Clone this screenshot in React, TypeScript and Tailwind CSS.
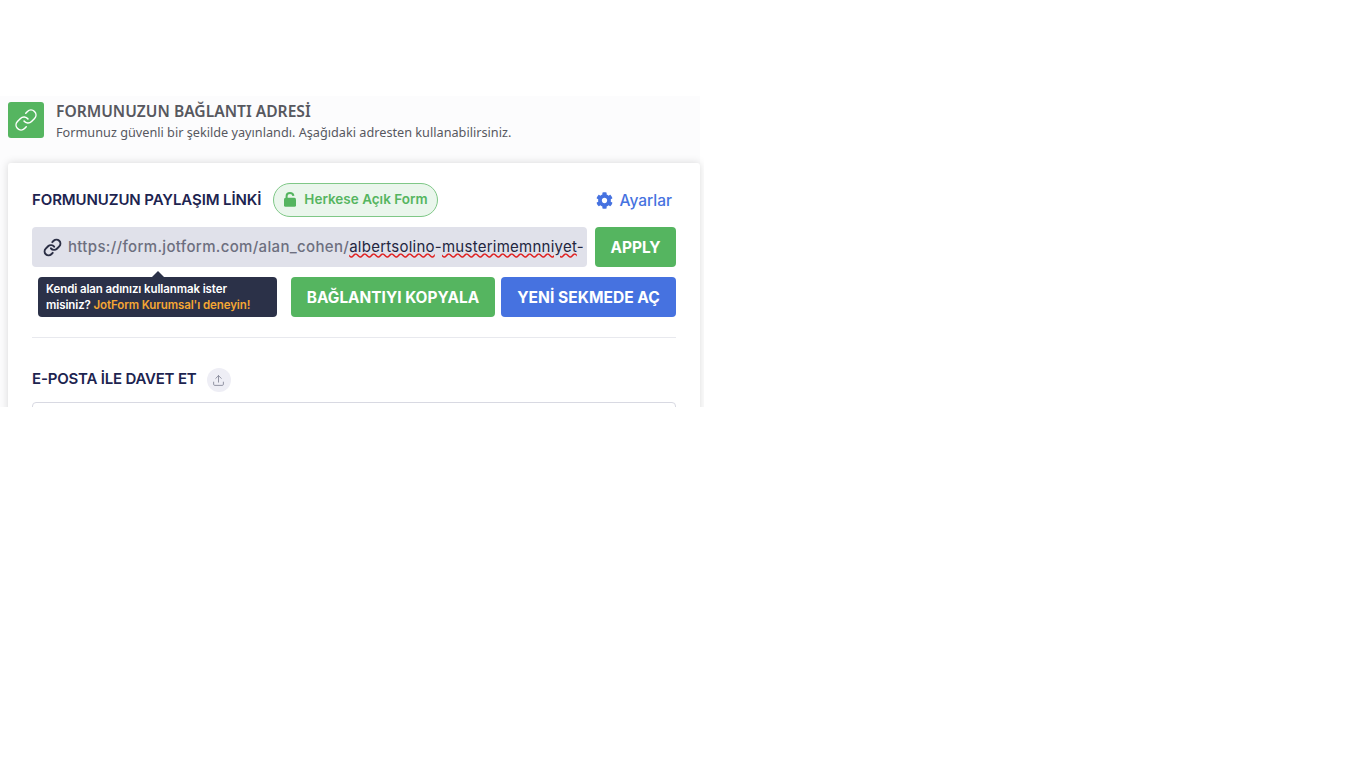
import { Link, Upload } from "lucide-react";
import { FaCog } from "react-icons/fa";

function LockOpen() {
  return (
    <svg width="12" height="15" viewBox="0 0 12 15" fill="none" className="-mt-0.5">
      <path d="M2.6 7V4C2.6 2.2 4.1 1.1 6 1.1C7.8 1.1 9.2 2.1 9.4 3.8" stroke="#55b560" strokeWidth="2" />
      <rect x="0" y="5.8" width="12" height="9" rx="1.6" fill="#55b560" />
    </svg>
  );
}

export default function App() {
  return (
    <div className="min-h-screen bg-white pt-24 font-['Inter',sans-serif]">
      <div className="h-[311px] w-[704px] overflow-hidden">
        <div className="w-[700px] bg-[#fcfcfd] pb-10 pl-2">
          <div className="flex h-[67px] items-start gap-3 pt-1.5">
            <div className="flex h-9 w-9 items-center justify-center rounded-[3px] bg-[#55b560]">
              <Link size={24} strokeWidth={1.5} className="text-white" />
            </div>
            <div className="font-['Noto_Sans',sans-serif] text-[#57585f]">
              <h2 className="text-[15.6px] leading-[18px] font-semibold">FORMUNUZUN BAĞLANTI ADRESİ</h2>
              <p className="mt-0.5 text-[12.7px] leading-5">
                Formunuz güvenli bir şekilde yayınlandı. Aşağıdaki adresten kullanabilirsiniz.
              </p>
            </div>
          </div>

          <div className="h-[300px] rounded-t-[3px] bg-white px-6 pt-5 shadow-[0_0_8px_rgba(0,0,0,0.15)]">
            <div className="flex h-[34px] items-center">
              <h3 className="mt-px text-[15px] font-semibold tracking-[-0.1px] text-[#1d2450]">FORMUNUZUN PAYLAŞIM LİNKİ</h3>
              <div className="ml-3 flex h-[34px] w-[165px] items-center gap-2 rounded-full border border-[#7fc887] bg-[#eaf6ec] pl-[10px]">
                <LockOpen />
                <span className="-mt-px text-[13.5px] font-semibold text-[#55b560]">Herkese Açık Form</span>
              </div>
              <div className="mr-1 ml-auto flex items-center gap-[7px] text-[#4672e0]">
                <FaCog size={17} />
                <span className="mt-px text-[15.5px] font-medium">Ayarlar</span>
              </div>
            </div>

            <div className="mt-[10px] flex gap-2">
              <div className="flex h-10 w-[555px] items-center gap-1.5 rounded-[4px] bg-[#e0e1ea] pr-1 pl-[11px]">
                <Link size={19} strokeWidth={2.5} className="shrink-0 text-[#2b2f45]" />
                <div className="min-w-0 flex-1 overflow-hidden pb-0.5 whitespace-nowrap">
                  <span className="text-[15px] font-medium tracking-[0.33px] text-[#6d6f7f]">
                    https://form.jotform.com/alan_cohen/
                  </span>
                  <span className="text-[15px] tracking-[0.25px] text-[#23263f]">
                    <span className="underline decoration-[#e02020] decoration-wavy">albertsolino</span>-
                    <span className="underline decoration-[#e02020] decoration-wavy">musterimemnniyet</span>-
                  </span>
                </div>
              </div>
              <button className="h-10 w-[81px] rounded-[4px] bg-[#55b560] pt-px text-[15.4px] font-bold text-white">
                APPLY
              </button>
            </div>

            <div className="mt-[10px] flex items-start">
              <div className="relative ml-1.5 flex h-10 w-[239px] items-center rounded-[4px] bg-[#2b3148] pl-2 text-[11.5px] leading-4 font-semibold tracking-[-0.1px] text-white">
                <span className="absolute -top-[6px] left-[114px] h-0 w-0 border-x-[6px] border-b-[6px] border-x-transparent border-b-[#2b3148]" />
                <p>
                  Kendi alan adınızı kullanmak ister
                  <br />
                  misiniz? <span className="text-[#f5a733]">JotForm Kurumsal'ı deneyin!</span>
                </p>
              </div>
              <button className="ml-[14px] h-10 w-[204px] rounded-[4px] bg-[#55b560] pt-px text-[15.4px] font-bold text-white">
                BAĞLANTIYI KOPYALA
              </button>
              <button className="ml-1.5 h-10 w-[175px] rounded-[4px] bg-[#4672e0] pt-px text-[15.6px] font-bold text-white">
                YENİ SEKMEDE AÇ
              </button>
            </div>

            <div className="mt-5 h-px bg-[#e8e9ee]" />

            <div className="mt-[30px] flex h-6 items-center gap-[10px]">
              <h3 className="mb-0.5 text-[15px] font-semibold tracking-[-0.2px] text-[#1d2450]">E-POSTA İLE DAVET ET</h3>
              <div className="flex h-6 w-6 items-center justify-center rounded-full bg-[#eeeef5]">
                <Upload size={13} strokeWidth={1.5} className="text-[#7d7f90]" />
              </div>
            </div>

            <div className="mt-[10px] h-20 rounded-[4px] border border-[#d8d9e2]" />
          </div>
        </div>
      </div>
    </div>
  );
}
